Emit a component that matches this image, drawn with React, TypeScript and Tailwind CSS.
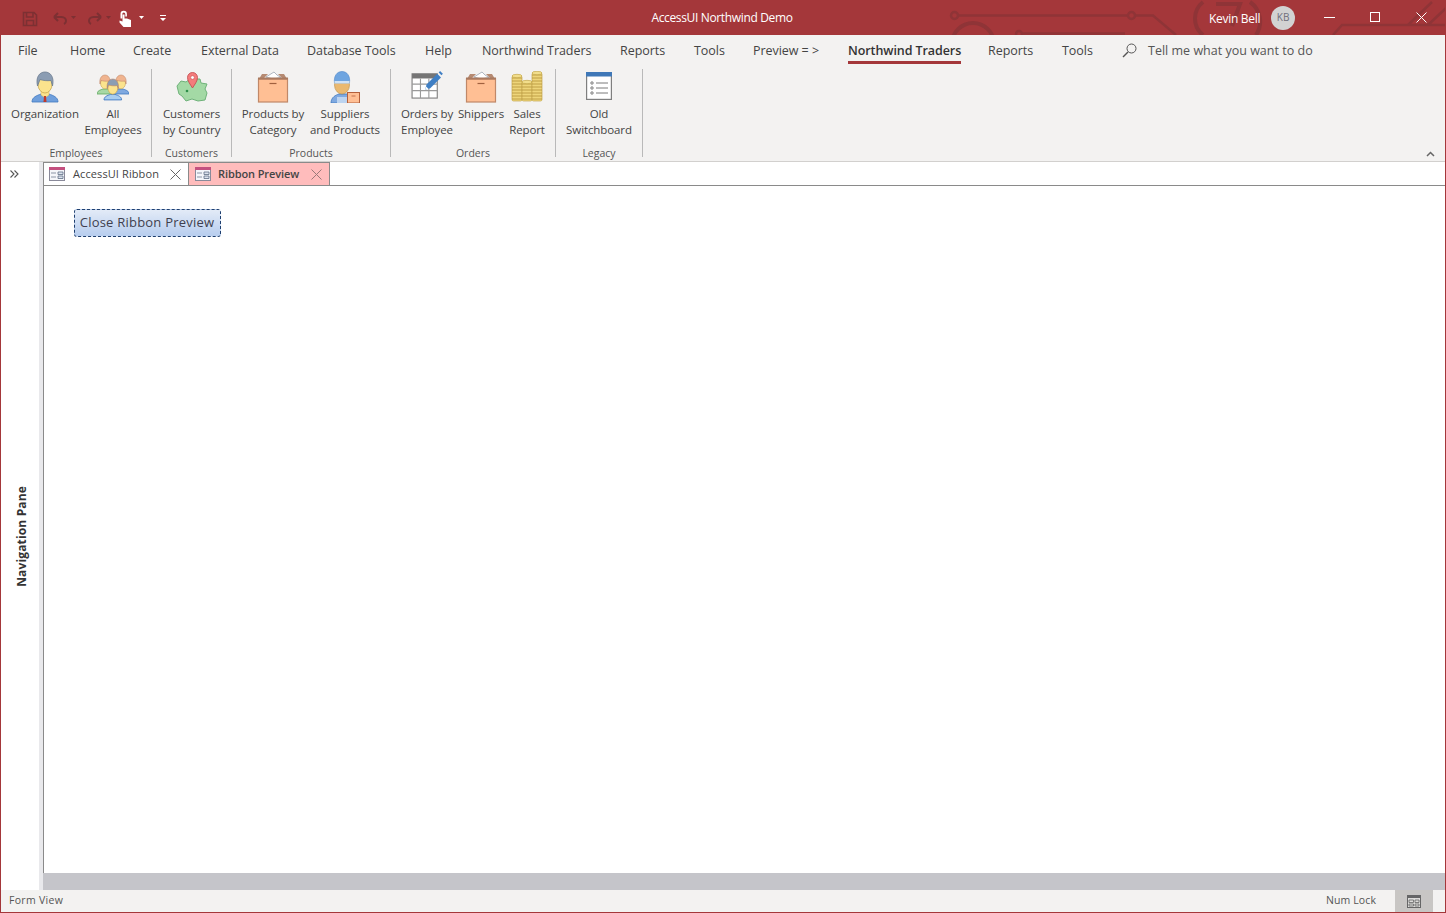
import React from "react";

const red = "#a4373a";

function Circuit() {
  return (
    <svg className="absolute left-0 top-0 pointer-events-none" width="1446" height="35" viewBox="0 0 1446 35" fill="none" stroke="#8f3437" strokeWidth="2.5">
      <circle cx="954.5" cy="15.5" r="3.5" />
      <path d="M958 15.5H1128" />
      <circle cx="1131.5" cy="15.5" r="3.5" />
      <path d="M1135 15.5H1153L1176 35" />
      <circle cx="973" cy="44" r="21" strokeWidth="4" />
      <circle cx="1019" cy="34" r="3" />
      <path d="M1022 33.5H1125" />
      <path d="M1203 35A21 21 0 0 1 1203 2M1250 2A24 24 0 0 1 1256 35" strokeWidth="4" />
      <path d="M1216 4H1240L1232 26" strokeWidth="4" />
      <path d="M1333 35L1342 25H1446M1408 25L1432 2M1428 25L1446 8" />
    </svg>
  );
}

function Qat() {
  return (
    <div className="flex items-center h-full ml-[22px] relative">
      <svg width="16" height="16" viewBox="0 0 16 16" fill="none" stroke="#7d3033" strokeWidth="1.6" className="mt-[2px]">
        <path d="M1.5 1.5H12L14.5 4V14.5H1.5Z" />
        <path d="M4.5 1.5V6H11V1.5M4.5 14.5V9.5H11.5V14.5" />
      </svg>
      <svg width="16" height="14" viewBox="0 0 16 14" fill="none" stroke="#7d3033" strokeWidth="2" className="ml-[14px]">
        <path d="M2 6H9.5C12.5 6 14 8 14 10C14 11.5 13 12.5 12 13M2 6L6 2M2 6L6 10" />
      </svg>
      <svg width="5" height="3" viewBox="0 0 5 3" fill="#7d3033" className="ml-[3px]"><path d="M0 0H5L2.5 3Z" /></svg>
      <svg width="16" height="14" viewBox="0 0 16 14" fill="none" stroke="#7d3033" strokeWidth="2" className="ml-[11px]">
        <path d="M14 6H6.5C3.5 6 2 8 2 10C2 11.5 3 12.5 4 13M14 6L10 2M14 6L10 10" />
      </svg>
      <svg width="5" height="3" viewBox="0 0 5 3" fill="#7d3033" className="ml-[3px]"><path d="M0 0H5L2.5 3Z" /></svg>
      <svg width="12" height="17" viewBox="0 0 12 17" fill="#fff" className="ml-[8px] mt-[1px]">
        <path d="M1.500 4a3.200 3.200 0 0 1 6.400 0V6.500H6.300V4a1.500 1.500 0 0 0-3 0V8.500H1.500Z" />
        <path d="M3.500 4.500H5.500V8.500H8L12 10V17H4.500L0.500 12.500V10.500L3.500 11.500Z" />
      </svg>
      <svg width="5" height="3" viewBox="0 0 5 3" fill="#fff" className="ml-[8px]"><path d="M0 0H5L2.5 3Z" /></svg>
      <svg width="6" height="6" viewBox="0 0 6 6" fill="#fff" className="ml-[16px]">
        <path d="M0 0H6V1H0ZM0 3H6L3 6Z" />
      </svg>
    </div>
  );
}

function WindowButtons() {
  return (
    <div className="flex items-center h-full ml-[29px]">
      <svg width="11" height="11" viewBox="0 0 11 11" stroke="#fff" fill="none"><path d="M0 5.5H11" /></svg>
      <svg width="11" height="11" viewBox="0 0 11 11" stroke="#fff" fill="none" className="ml-[35px]"><rect x="0.5" y="0.5" width="9" height="9" /></svg>
      <svg width="11" height="11" viewBox="0 0 11 11" stroke="#fff" fill="none" className="ml-[35px]"><path d="M0.5 0.5L10.5 10.5M10.5 0.5L0.5 10.5" /></svg>
    </div>
  );
}

function TitleBar() {
  return (
    <div className="relative flex items-center h-[35px] shrink-0 bg-[#a4373a] -mx-px">
      <Circuit />
      <div className="relative w-[600px] h-full"><Qat /></div>
      <div className="relative w-[244px] text-center text-white text-[12px] leading-[35px] tracking-[-0.35px]">AccessUI Northwind Demo</div>
      <div className="relative flex items-center h-full ml-[365px]">
        <span className="text-white text-[12px] tracking-[-0.3px] mt-[2px]">Kevin Bell</span>
        <div className="ml-[11px] w-[24px] h-[24px] rounded-full bg-[#d2d2d2] text-[#6f6f7c] text-[10px] flex items-center justify-center">KB</div>
        <WindowButtons />
      </div>
    </div>
  );
}

const tabs: [string, number, boolean?][] = [
  ["File", 52],
  ["Home", 63],
  ["Create", 68],
  ["External Data", 106],
  ["Database Tools", 118],
  ["Help", 57],
  ["Northwind Traders", 138],
  ["Reports", 74],
  ["Tools", 59],
  ["Preview = >", 95],
  ["Northwind Traders", 140, true],
  ["Reports", 74],
  ["Tools", 60],
];

function TabRow() {
  return (
    <div className="flex h-[31px] shrink-0 pl-[17px] bg-[#f3f2f1] text-[12.5px] text-[#444]">
      {tabs.map(([label, w, active], i) => (
        <div key={i} style={{ width: w }} className="relative h-full pt-[6px] whitespace-nowrap">
          <span className={active ? "font-semibold text-[#333] tracking-[-0.08px] inline-block border-b-[3px] border-[#a4373a] pb-[1px] leading-[19px]" : "leading-[19px] tracking-[-0.05px] inline-block"}>
            {label}
          </span>
        </div>
      ))}
      <div className="flex items-center h-full">
        <svg width="15" height="15" viewBox="0 0 15 15" fill="none" stroke="#555" strokeWidth="1">
          <circle cx="9.5" cy="5.5" r="4.5" />
          <path d="M6 9L1 14" strokeWidth="1.4" />
        </svg>
        <span className="ml-[11px] pt-[2px] text-[#555] tracking-[0.01px]">Tell me what you want to do</span>
      </div>
    </div>
  );
}

function OrganizationIcon() {
  return (
    <svg width="32" height="32" viewBox="0 0 32 32">
      <path d="M3 31C3 26 8 24.500 12 23L16 25L20 23C24 24.500 29 26 29 31Z" fill="#6f9fdc" stroke="#3f78c0" strokeWidth="0.8" />
      <path d="M12 20V24L16 27L20 24V20Z" fill="#fbe38d" stroke="#c9a850" strokeWidth="0.4" />
      <path d="M15 25H17L17.500 31H14.500Z" fill="#c0392b" />
      <ellipse cx="16" cy="13.500" rx="7" ry="8.500" fill="#fbe38d" stroke="#c9a850" strokeWidth="0.8" />
      <path d="M8.500 15C6.500 6 10.500 1 16 1C21.500 1 25.500 6 23.500 15L22 9.500C18 10 14 9.500 11 8.500Z" fill="#8b9db3" stroke="#6c7c91" strokeWidth="0.8" />
    </svg>
  );
}

function Person({ x, y, s, hair, shirt, shirtStroke }: { x: number; y: number; s: number; hair: string; shirt: string; shirtStroke: string }) {
  return (
    <g transform={`translate(${x} ${y}) scale(${s})`}>
      <path d="M0 19C0 16 3 15 6 14H10C13 15 16 16 16 19Z" fill={shirt} stroke={shirtStroke} strokeWidth="0.8" />
      <ellipse cx="8" cy="8" rx="4.500" ry="5.800" fill="#fbe38d" stroke="#c9a850" strokeWidth="0.6" />
      <path d="M3 9C2 3 5 0 8 0C11 0 14 3 13 9L12 6C9 6.500 6 6 4 5.500Z" fill={hair} stroke="#b97f5e" strokeWidth="0.5" />
    </g>
  );
}

function AllEmployeesIcon() {
  return (
    <svg width="32" height="32" viewBox="0 0 32 32">
      <Person x={0} y={4} s={1} hair="#f0b48f" shirt="#a8d8a5" shirtStroke="#5fa85f" />
      <Person x={16} y={4} s={1} hair="#f0b48f" shirt="#7fa9e0" shirtStroke="#3f78c0" />
      <Person x={7} y={8} s={1.1} hair="#8b9db3" shirt="#a8cdf0" shirtStroke="#3f78c0" />
    </svg>
  );
}

function CountryIcon() {
  return (
    <svg width="32" height="32" viewBox="0 0 32 32">
      <path d="M1 15L5 10L10 11L14 8H24L25 12L31 13L29 18L31 22L29 29L22 30L16 28L10 30L6 25L3 23L2 19Z" fill="#a3d9a5" stroke="#6fb27a" strokeWidth="1" />
      <circle cx="11" cy="20" r="1.300" fill="#2f8f4a" />
      <path d="M16.500 17C14 13 11.500 10 11.500 6.500A5 5 0 0 1 21.500 6.500C21.500 10 19 13 16.500 17Z" fill="#f47c7c" stroke="#c0484a" strokeWidth="0.8" />
      <circle cx="16.500" cy="6.500" r="1.800" fill="#fff" stroke="#c0484a" strokeWidth="0.5" />
    </svg>
  );
}

function BoxIcon() {
  return (
    <svg width="32" height="32" viewBox="0 0 32 32">
      <path d="M9 6L17 1L20 4L24 6.500L16 8Z" fill="#fff" stroke="#9aa5b1" strokeWidth="0.8" />
      <path d="M5 3H11L6 8H2ZM27 3H21L26 8H30Z" fill="#b58a72" />
      <rect x="1.500" y="8" width="29" height="23" fill="#ffbf94" stroke="#c08868" strokeWidth="1.2" />
      <rect x="1" y="6.500" width="30" height="2" fill="#a97a60" />
      <path d="M12.500 12.500H19.500" stroke="#a0603e" strokeWidth="1.200" />
    </svg>
  );
}

function SupplierIcon() {
  return (
    <svg width="32" height="32" viewBox="0 0 32 32">
      <path d="M2 32C2 26 7 24 10 23H18C21 24 24 26 24 32Z" fill="#7fa9e0" stroke="#3f78c0" strokeWidth="0.8" />
      <path d="M8 26H18V32H8Z" fill="#bcd4f0" />
      <ellipse cx="13" cy="14" rx="7.500" ry="9" fill="#eab970" stroke="#b78b45" strokeWidth="0.6" />
      <path d="M5.500 12C4.500 5 8 0.500 13 0.500C18 0.500 21.500 5 20.500 12Z" fill="#6fa5e0" stroke="#4d87c9" strokeWidth="0.6" />
      <path d="M5.500 10H20.500V12.500H5.500Z" fill="#cfe2f6" />
      <rect x="18.500" y="21.500" width="12" height="10.500" fill="#ffbf94" stroke="#b3603c" strokeWidth="1" />
      <path d="M22.500 25H26.500" stroke="#b3603c" strokeWidth="0.800" />
    </svg>
  );
}

function OrdersIcon() {
  return (
    <svg width="32" height="28" viewBox="0 0 34 30" className="mb-[4px]">
      <rect x="1" y="3" width="27" height="26" fill="#fff" stroke="#808080" strokeWidth="1.200" />
      <rect x="1" y="3" width="27" height="5" fill="#757575" />
      <path d="M1 14H28M1 21H28M10 8V29M19 8V29" stroke="#9a9a9a" strokeWidth="1.200" fill="none" />
      <path d="M15 20L16.500 14.500L28 3L32 7L20.500 18.500Z" fill="#3f7fc4" />
      <path d="M29.500 1.500L31 0L34 3L32.500 4.500Z" fill="#3f7fc4" />
      <path d="M15 20L16 16.500L18.500 19Z" fill="#ffffff" />
    </svg>
  );
}

function Coins({ x, y, n }: { x: number; y: number; n: number }) {
  const rows = Array.from({ length: n });
  return (
    <g>
      <rect x={x} y={y} width="10" height={n * 3 + 1} rx="1.500" fill="#eed57a" stroke="#c4a84a" strokeWidth="0.700" />
      {rows.map((_, i) => (
        <path key={i} d={`M${x} ${y + i * 3 + 2}H${x + 10}`} stroke="#b3923a" strokeWidth="0.800" />
      ))}
      <ellipse cx={x + 5} cy={y} rx="5" ry="1.700" fill="#f2de8c" stroke="#c4a84a" strokeWidth="0.700" />
    </g>
  );
}

function CoinsIcon() {
  return (
    <svg width="32" height="32" viewBox="0 0 32 32">
      <Coins x={1} y={5} n={8} />
      <Coins x={11} y={11} n={6} />
      <Coins x={21} y={2} n={9} />
    </svg>
  );
}

function SwitchboardIcon() {
  return (
    <svg width="26" height="28" viewBox="0 0 26 28" className="mb-[3px]">
      <rect x="0.600" y="0.600" width="24.800" height="26.800" fill="#fff" stroke="#7f7f7f" strokeWidth="1.200" />
      <rect x="0" y="0" width="26" height="4.500" fill="#3f78b8" />
      <g stroke="#6b6b6b" fill="none" strokeWidth="0.900">
        <circle cx="6" cy="11" r="1.200" />
        <circle cx="6" cy="16" r="1.200" />
        <circle cx="6" cy="21" r="1.200" />
        <path d="M10 11H22M10 16H22M10 21H22" />
      </g>
    </svg>
  );
}

function RibbonButton({ w, lines, children }: { w: number; lines: string[]; children: React.ReactNode }) {
  return (
    <div style={{ width: w }} className="flex flex-col items-center shrink-0">
      <div className="h-[34px] flex items-end justify-center">{children}</div>
      <div className="mt-[3px] text-center text-[11.500px] leading-[16px] text-[#444] whitespace-nowrap tracking-[-0.1px]">
        {lines.map((l) => (
          <div key={l}>{l}</div>
        ))}
      </div>
    </div>
  );
}

function Group({ width, pl, label, children }: { width: number; pl: number; label: string; children: React.ReactNode }) {
  return (
    <div style={{ width }} className="shrink-0 flex flex-col border-r border-[#b9b9b9] mt-[3px] h-[88px]">
      <div className="flex h-[77px] shrink-0" style={{ paddingLeft: pl }}>{children}</div>
      <div className="h-[14px] shrink-0 text-center text-[10.500px] leading-[14px] text-[#555]">{label}</div>
    </div>
  );
}

function Ribbon() {
  return (
    <div className="relative flex h-[96px] shrink-0 bg-[#f3f2f1] border-b border-[#d2d0ce]">
      <Group width={151} pl={8} label="Employees">
        <RibbonButton w={72} lines={["Organization"]}><OrganizationIcon /></RibbonButton>
        <RibbonButton w={64} lines={["All", "Employees"]}><AllEmployeesIcon /></RibbonButton>
      </Group>
      <Group width={80} pl={0} label="Customers">
        <RibbonButton w={79} lines={["Customers", "by Country"]}><CountryIcon /></RibbonButton>
      </Group>
      <Group width={159} pl={3} label="Products">
        <RibbonButton w={76} lines={["Products by", "Category"]}><BoxIcon /></RibbonButton>
        <RibbonButton w={68} lines={["Suppliers", "and Products"]}><SupplierIcon /></RibbonButton>
      </Group>
      <Group width={165} pl={7} label="Orders">
        <RibbonButton w={58} lines={["Orders by", "Employee"]}><OrdersIcon /></RibbonButton>
        <RibbonButton w={50} lines={["Shippers"]}><BoxIcon /></RibbonButton>
        <RibbonButton w={42} lines={["Sales", "Report"]}><CoinsIcon /></RibbonButton>
      </Group>
      <Group width={87} pl={0} label="Legacy">
        <RibbonButton w={86} lines={["Old", "Switchboard"]}><SwitchboardIcon /></RibbonButton>
      </Group>
      <svg width="9" height="6" viewBox="0 0 9 6" fill="none" stroke="#666" strokeWidth="1.500" className="absolute right-[10px] bottom-[4px]">
        <path d="M1 5L4.500 1.500L8 5" />
      </svg>
    </div>
  );
}

function FormIcon() {
  return (
    <svg width="16" height="14" viewBox="0 0 16 14" className="shrink-0">
      <rect x="0.500" y="0.500" width="15" height="13" fill="#f4f6fa" stroke="#8a8a9a" />
      <rect x="0" y="0" width="16" height="3" fill="#c4507f" />
      <path d="M2 6H7M2 10H7" stroke="#8a94a5" strokeWidth="1" />
      <path d="M9 5H14V7.500H9ZM9 9H14V11.500H9Z" fill="#dce3ee" stroke="#5f6f85" strokeWidth="0.800" />
    </svg>
  );
}

function CloseX({ color }: { color: string }) {
  return (
    <svg width="11" height="11" viewBox="0 0 11 11" stroke={color} fill="none" strokeWidth="1">
      <path d="M0.500 0.500L10.500 10.500M10.500 0.500L0.500 10.500" />
    </svg>
  );
}

function DocTabs() {
  return (
    <div className="flex h-[24px] shrink-0 border-b border-[#8a8a8a] bg-white">
      <div className="w-[144px] h-full flex items-center pl-[5px] border-t border-[#8a8a8a] -mb-px bg-white">
        <FormIcon />
        <span className="ml-[8px] text-[11px] text-[#444] tracking-[0.1px] w-[97px] whitespace-nowrap">AccessUI Ribbon</span>
        <CloseX color="#666" />
      </div>
      <div className="w-[142px] h-full flex items-center pl-[6px] bg-[#ffbcbc] border-t border-r border-l border-[#8a8a8a]">
        <FormIcon />
        <span className="ml-[7px] text-[11px] font-semibold text-[#444] tracking-[-0.1px] w-[93px] whitespace-nowrap">Ribbon Preview</span>
        <CloseX color="#9a7a7a" />
      </div>
    </div>
  );
}

function NavPane() {
  return (
    <div className="w-[42px] shrink-0 flex flex-col relative border-r-[4px] border-r-[#e9e9ec] bg-white">
      <div className="h-[24px] flex items-center pl-[9px] text-[#555]">
        <svg width="9" height="8" viewBox="0 0 9 8" fill="none" stroke="#555" strokeWidth="1.100">
          <path d="M0.500 0.500L4 4L0.500 7.500M4.500 0.500L8 4L4.500 7.500" />
        </svg>
      </div>
      <div className="flex-1 flex items-center justify-center">
        <span className="[writing-mode:vertical-rl] rotate-180 text-[12px] font-bold text-[#333] tracking-[0.15px] mb-[3px] ml-[4px]">Navigation Pane</span>
      </div>
    </div>
  );
}

function StatusBar() {
  return (
    <div className="flex items-center h-[22px] shrink-0 bg-[#f3f2f1] text-[10.500px] text-[#555] tracking-[0.1px]">
      <span className="ml-[8px] tracking-[0.3px]">Form View</span>
      <span className="ml-auto">Num Lock</span>
      <div className="ml-[19px] mr-[12px] w-[38px] h-full bg-[#c8c6c4] flex items-center justify-center">
        <svg width="14" height="13" viewBox="0 0 14 13">
          <rect x="0.500" y="0.500" width="13" height="12" fill="#dddcda" stroke="#666" />
          <rect x="0" y="0" width="14" height="3" fill="#666" />
          <path d="M2 5H6.500V7.500H2ZM2 9H6.500V11H2ZM8 5H12V7.500H8ZM8 9H12V11H8Z" fill="none" stroke="#666" strokeWidth="0.800" />
        </svg>
      </div>
    </div>
  );
}

export default function App() {
  return (
    <div
      className="w-[1446px] h-[913px] flex flex-col overflow-hidden bg-white border-x border-b border-[#a4373a]"
      style={{ fontFamily: '"Open Sans", "Noto Sans", sans-serif', borderColor: red }}
    >
      <TitleBar />
      <TabRow />
      <Ribbon />
      <div className="flex-1 flex min-h-0">
        <NavPane />
        <div className="flex-1 flex flex-col min-w-0">
          <div className="flex-1 flex flex-col min-h-0 border-l border-[#8a8a8a]">
            <DocTabs />
            <div className="flex-1 bg-white pl-[30px] pt-[23px]">
              <div className="w-[147px] h-[28px] rounded-[3px] border border-dashed border-[#1f3f6f] bg-gradient-to-b from-[#e3ebf7] to-[#b7cdee] flex items-center justify-center text-[13px] text-[#3f3f4f] whitespace-nowrap tracking-[0.22px] pb-[1px] pr-[1px]">
                Close Ribbon Preview
              </div>
            </div>
          </div>
          <div className="h-[17px] shrink-0 bg-[#c5c5ca]" />
        </div>
      </div>
      <StatusBar />
    </div>
  );
}
